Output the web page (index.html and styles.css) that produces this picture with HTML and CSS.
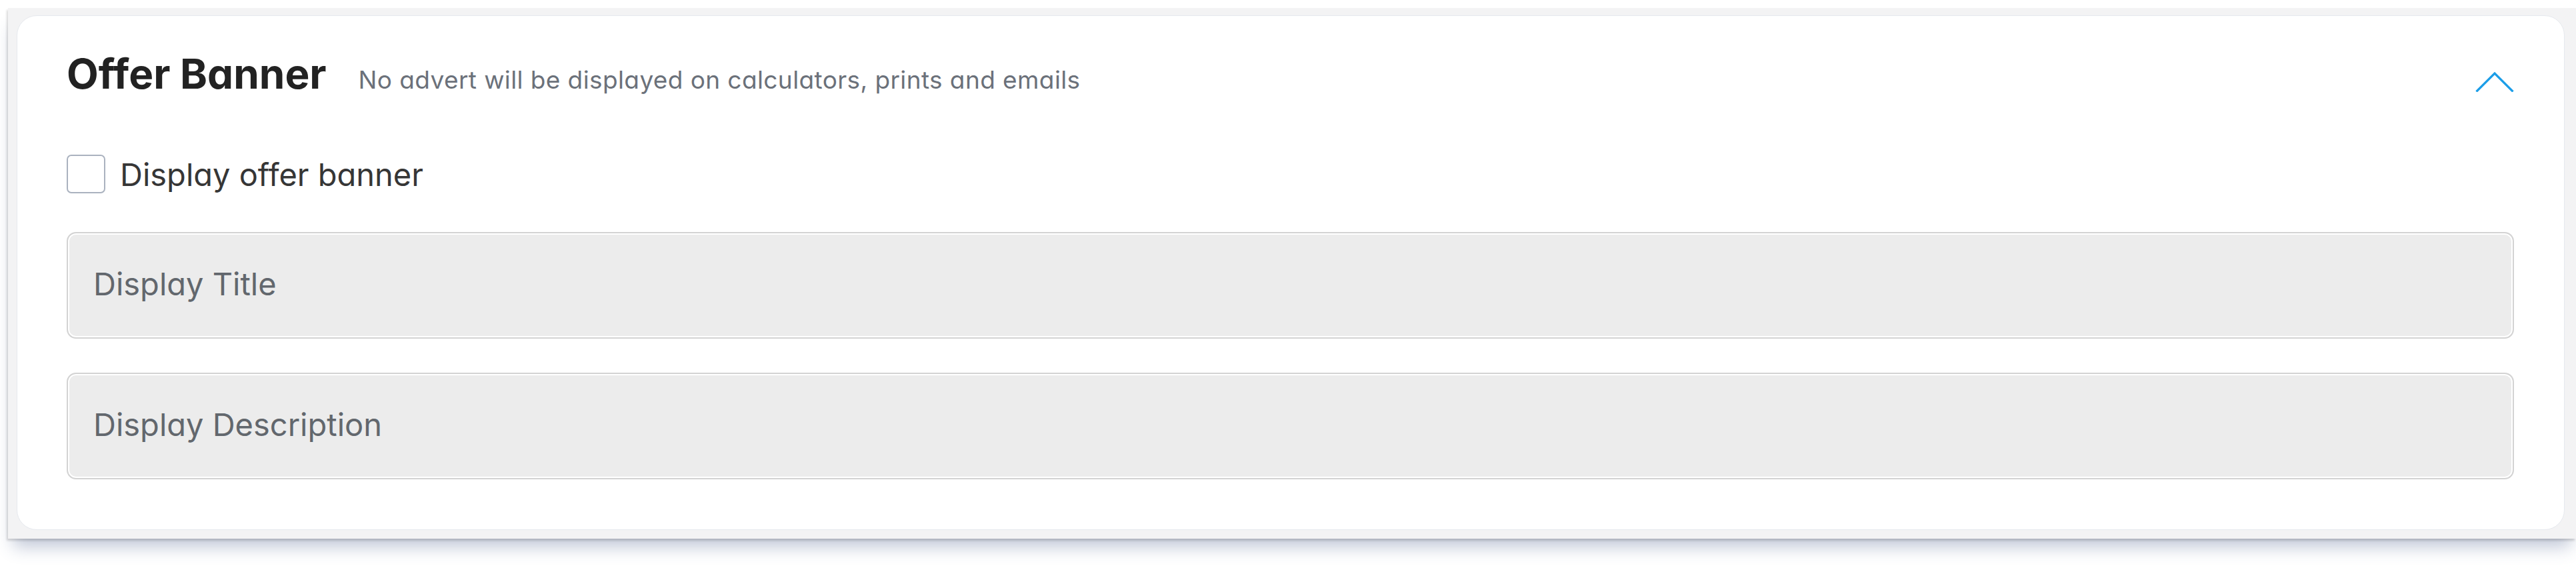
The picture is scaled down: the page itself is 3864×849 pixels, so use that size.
FILE: index.html
```html
<!DOCTYPE html>
<html lang="en">
<head>
<meta charset="utf-8">
<title>Offer Banner</title>
<link rel="stylesheet" href="styles.css">
</head>
<body>
<div class="panel">
  <section class="card">
    <header class="header">
      <div class="title-group">
        <h2 class="title">Offer Banner</h2>
        <span class="subtitle">No advert will be displayed on calculators, prints and emails</span>
      </div>
      <svg class="chevron" width="58" height="30" viewBox="0 0 58 30" aria-hidden="true">
        <polyline points="1.5,29.5 29,2 56.5,29.5" fill="none" stroke="#1a9de8" stroke-width="3.2"/>
      </svg>
    </header>
    <label class="check-row">
      <span class="checkbox"></span>
      <span class="check-label">Display offer banner</span>
    </label>
    <div class="fields">
      <div class="field"><span class="placeholder">Display Title</span></div>
      <div class="field"><span class="placeholder">Display Description</span></div>
    </div>
  </section>
</div>
</body>
</html>
```
FILE: styles.css
```css
html {
  overflow: hidden;
  background: #ffffff;
}
body {
  margin: 0;
  padding: 0 0 60px 0;
  font-family: Inter, "Noto Sans", "Liberation Sans", sans-serif;
  font-feature-settings: "cv11";
}
.panel {
  margin: 12px 0 0 12px;
  padding: 11px 17px 13px 13px;
  background: #f3f3f4;
  box-shadow: -2px 3px 3px rgba(0, 0, 0, 0.14), 0 20px 24px -8px rgba(60, 80, 130, 0.32);
}
.card {
  background: #ffffff;
  border: 1px solid #e6e9ee;
  border-radius: 30px;
  padding: 49px 75px 75px 74px;
}
.header {
  display: flex;
  align-items: flex-start;
  height: 75px;
}
.title-group {
  flex: 1;
  display: flex;
  align-items: baseline;
}
.title {
  margin: 0;
  font-size: 62px;
  line-height: 75px;
  font-weight: 700;
  color: #222222;
}
.subtitle {
  margin-left: 48px;
  font-size: 37px;
  letter-spacing: 0.4px;
  color: #6b717a;
}
.chevron {
  margin-top: 35px;
  flex: none;
}
.check-row {
  margin-top: 84px;
  display: flex;
  align-items: center;
  height: 58px;
  gap: 22px;
}
.checkbox {
  box-sizing: border-box;
  width: 58px;
  height: 58px;
  border: 2px solid #aab2bf;
  border-radius: 7px;
  background: #ffffff;
}
.check-label {
  font-size: 47px;
  color: #363636;
}
.fields {
  margin-top: 58px;
  display: flex;
  flex-direction: column;
  gap: 51px;
}
.field {
  box-sizing: border-box;
  height: 160px;
  border: 2px solid #d3d3d3;
  box-shadow: inset 0 0 0 2px #ffffff;
  border-radius: 14px;
  background: #ececec;
  display: flex;
  align-items: center;
  padding: 0 0 6px 38px;
}
.placeholder {
  font-size: 47px;
  color: #62676d;
}
```
